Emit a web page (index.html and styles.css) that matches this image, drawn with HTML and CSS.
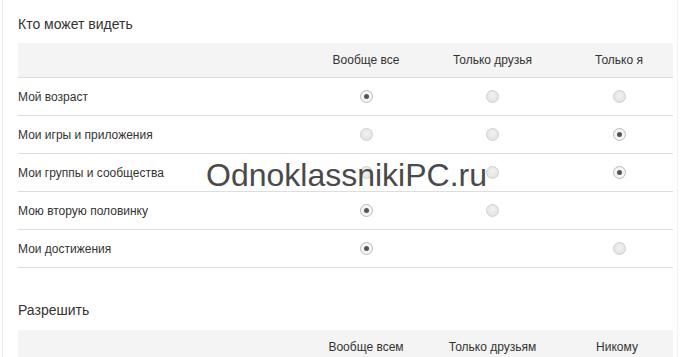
FILE: index.html
```html
<!DOCTYPE html>
<html lang="ru">
<head>
  <meta charset="UTF-8">
  <title>Настройки публичности</title>
  <link rel="stylesheet" href="styles.css">
</head>
<body>
  <div class="page">
    <h2 class="title">Кто может видеть</h2>
    <div class="grid">
      <div class="head"></div>
      <div class="head col">Вообще все</div>
      <div class="head col">Только друзья</div>
      <div class="head col last">Только я</div>

      <div class="cell label">Мой возраст</div>
      <div class="cell col"><span class="radio on"></span></div>
      <div class="cell col"><span class="radio"></span></div>
      <div class="cell col last"><span class="radio"></span></div>

      <div class="cell label">Мои игры и приложения</div>
      <div class="cell col"><span class="radio"></span></div>
      <div class="cell col"><span class="radio"></span></div>
      <div class="cell col last"><span class="radio on"></span></div>

      <div class="cell label">Мои группы и сообщества</div>
      <div class="cell col"><span class="radio"></span></div>
      <div class="cell col"><span class="radio"></span></div>
      <div class="cell col last"><span class="radio on"></span></div>

      <div class="cell label">Мою вторую половинку</div>
      <div class="cell col"><span class="radio on"></span></div>
      <div class="cell col"><span class="radio"></span></div>
      <div class="cell col last"></div>

      <div class="cell label">Мои достижения</div>
      <div class="cell col"><span class="radio on"></span></div>
      <div class="cell col"></div>
      <div class="cell col last"><span class="radio"></span></div>
    </div>

    <h2 class="title second">Разрешить</h2>
    <div class="grid">
      <div class="head"></div>
      <div class="head col">Вообще всем</div>
      <div class="head col">Только друзьям</div>
      <div class="head col last2">Никому</div>
    </div>
  </div>
  <div class="watermark">OdnoklassnikiPC.ru</div>
</body>
</html>
```

FILE: styles.css
```css
body {
  margin: 0;
  font-family: "Liberation Sans", Arial, sans-serif;
  color: #333;
  background: #fff;
}
.page {
  box-sizing: border-box;
  margin-left: 2px;
  width: 676px;
  min-height: 357px;
  border-left: 1px solid #eee;
  border-right: 1px solid #f2f2f2;
  padding: 0 4px 0 15px;
  overflow: hidden;
}
.title {
  margin: 0;
  padding-top: 16px;
  height: 27px;
  font-size: 14px;
  font-weight: normal;
  line-height: 16px;
}
.title.second {
  padding-top: 34px;
  height: 28px;
}
.grid {
  display: grid;
  grid-template-columns: 285px 126px 127px 117px;
}
.head {
  background: #f4f4f4;
  height: 34px;
  line-height: 34px;
  font-size: 12px;
  border-bottom: 1px solid #ddd;
}
.cell {
  height: 37px;
  border-bottom: 1px solid #ddd;
  font-size: 12px;
  display: flex;
  align-items: center;
}
.col {
  text-align: center;
  justify-content: center;
}
.last {
  padding-left: 9px;
}
.last2 {
  padding-left: 5px;
}
.radio {
  box-sizing: border-box;
  width: 13px;
  height: 13px;
  border-radius: 50%;
  border: 1px solid #d0d0d0;
  background: radial-gradient(circle at 50% 40%, #f2f2f2, #dedede);
  position: relative;
}
.radio.on {
  background: #f4f4f4;
  border-color: #bbb;
}
.radio.on::after {
  content: "";
  position: absolute;
  left: 3px;
  top: 3px;
  width: 5px;
  height: 5px;
  border-radius: 50%;
  background: #555;
}
.watermark {
  position: absolute;
  left: 206px;
  top: 159px;
  font-family: "Liberation Sans", Arial, sans-serif;
  font-size: 32px;
  line-height: 32px;
  color: #4a4a4a;
}
```
